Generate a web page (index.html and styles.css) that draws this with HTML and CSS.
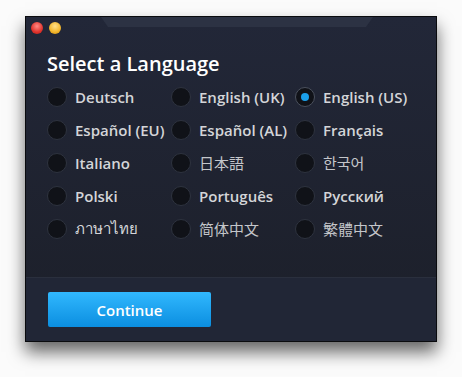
FILE: index.html
```html
<!DOCTYPE html>
<html lang="en">

<head>
    <meta charset="UTF-8">
    <meta name="viewport" content="width=device-width, initial-scale=1.0">
    <title>Select a Language</title>
    <link rel="stylesheet" href="styles.css">
</head>

<body>
    <div class="window">
        <!-- Title bar with traffic lights -->
        <div class="titlebar">
            <span class="light red"></span>
            <span class="light yellow"></span>
        </div>

        <div class="content">
            <h2 class="heading">Select a Language</h2>
            <div class="languages">
                <label class="option"><span class="radio"></span>Deutsch</label>
                <label class="option"><span class="radio"></span>English (UK)</label>
                <label class="option"><span class="radio checked"></span>English (US)</label>
                <label class="option"><span class="radio"></span>Español (EU)</label>
                <label class="option"><span class="radio"></span>Español (AL)</label>
                <label class="option"><span class="radio"></span>Français</label>
                <label class="option"><span class="radio"></span>Italiano</label>
                <label class="option cjk"><span class="radio"></span>日本語</label>
                <label class="option cjk"><span class="radio"></span>한국어</label>
                <label class="option"><span class="radio"></span>Polski</label>
                <label class="option"><span class="radio"></span>Português</label>
                <label class="option"><span class="radio"></span>Русский</label>
                <label class="option"><span class="radio"></span>ภาษาไทย</label>
                <label class="option cjk"><span class="radio"></span>简体中文</label>
                <label class="option cjk"><span class="radio"></span>繁體中文</label>
            </div>
        </div>

        <div class="footer">
            <button class="continue">Continue</button>
        </div>
    </div>
</body>

</html>
```
FILE: styles.css
```css
html {
    background: #fbfbfb;
}

body {
    margin: 0;
    min-height: 377px;
    box-sizing: border-box;
    padding: 16px 0 0 25px;
    font-family: "Open Sans", "Noto Sans", "Noto Sans CJK JP", sans-serif;
}

.window {
    position: relative;
    width: 410px;
    height: 324px;
    border: 1px solid #0a0b0e;
    background: linear-gradient(to bottom, #222738, #1c1f29);
    box-shadow: 0 10px 16px rgba(0, 0, 0, 0.6);
    display: flex;
    flex-direction: column;
}

/* lighter tab at the top of the title bar */
.window::before {
    content: "";
    position: absolute;
    top: 0;
    left: 75px;
    width: 272px;
    height: 10px;
    background: #2c3243;
    clip-path: polygon(0 0, 100% 0, calc(100% - 7px) 100%, 7px 100%);
}

.titlebar {
    display: flex;
    gap: 6px;
    padding: 5px 0 0 5px;
    height: 19px;
}

.light {
    width: 12px;
    height: 12px;
    border-radius: 50%;
}

.red {
    background: radial-gradient(circle at 50% 35%, #ff8a85, #e0332c 60%, #b51d18);
}

.yellow {
    background: radial-gradient(circle at 50% 35%, #ffe08a, #f2b52a 60%, #c98a10);
}

.content {
    flex: 1;
    padding: 11px 0 0 21px;
}

.heading {
    margin: 0 0 4px;
    font-size: 20px;
    line-height: 24px;
    font-weight: 600;
    color: #fff;
}

.languages {
    display: grid;
    grid-template-columns: repeat(3, 124px);
    grid-auto-rows: 33px;
}

.option {
    display: flex;
    align-items: center;
    gap: 8px;
    font-size: 15px;
    font-weight: 560;
    color: #d4d5d8;
    white-space: nowrap;
}

.option.cjk {
    font-weight: 400;
    color: #c4c6ca;
}

.radio {
    width: 18px;
    height: 18px;
    border-radius: 50%;
    background: #101218;
    border: 1px solid #2e333f;
    display: flex;
    align-items: center;
    justify-content: center;
}

.radio.checked {
    border-color: #4a505d;
}

.radio.checked::after {
    content: "";
    width: 8px;
    height: 8px;
    border-radius: 50%;
    background: #1a9fea;
}

.footer {
    border-top: 1px solid #2a2f3d;
    background: #212636;
    padding: 14px 0 14px 22px;
}

.continue {
    display: block;
    width: 163px;
    height: 35px;
    border: 0;
    border-radius: 2px;
    background: linear-gradient(to bottom, #31b8fe, #0b8ee0);
    color: #fff;
    font-family: inherit;
    font-size: 15px;
    font-weight: 600;
}
```
